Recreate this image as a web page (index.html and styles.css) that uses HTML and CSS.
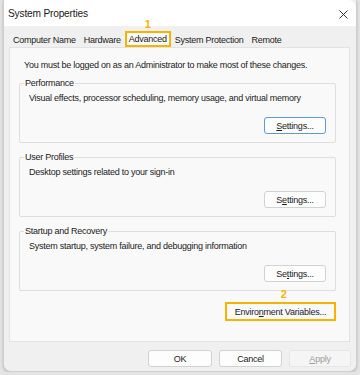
FILE: index.html
```html
<!DOCTYPE html>
<html lang="en">
<head>
    <meta charset="UTF-8">
    <meta name="viewport" content="width=device-width, initial-scale=1.0">
    <title>System Properties</title>
    <link rel="stylesheet" href="styles.css">
</head>
<body>
    <div class="window">
        <div class="titlebar">
            <span class="title">System Properties</span>
            <svg class="close" width="9" height="9" viewBox="0 0 9 9">
                <path d="M0.5 0.5 L8.5 8.5 M8.5 0.5 L0.5 8.5" stroke="#333" stroke-width="1" fill="none"/>
            </svg>
        </div>

        <!-- tabs -->
        <div class="tabs">
            <div class="tab">Computer Name</div>
            <div class="tab">Hardware</div>
            <div class="tab active">Advanced<span class="step">1</span></div>
            <div class="tab">System Protection</div>
            <div class="tab">Remote</div>
        </div>

        <div class="panel">
            <p class="note">You must be logged on as an Administrator to make most of these changes.</p>

            <fieldset class="group">
                <legend>Performance</legend>
                <p>Visual effects, processor scheduling, memory usage, and virtual memory</p>
                <div class="row"><button class="btn focus"><u>S</u>ettings...</button></div>
            </fieldset>

            <fieldset class="group">
                <legend>User Profiles</legend>
                <p>Desktop settings related to your sign-in</p>
                <div class="row"><button class="btn">S<u>e</u>ttings...</button></div>
            </fieldset>

            <fieldset class="group">
                <legend>Startup and Recovery</legend>
                <p>System startup, system failure, and debugging information</p>
                <div class="row"><button class="btn">Se<u>t</u>tings...</button></div>
            </fieldset>

            <div class="row">
                <button class="btn env">Enviro<u>n</u>ment Variables...<span class="step">2</span></button>
            </div>
        </div>

        <div class="actions">
            <button class="btn ok">OK</button>
            <button class="btn cancel">Cancel</button>
            <button class="btn disabled"><u>A</u>pply</button>
        </div>
    </div>
</body>
</html>
```

FILE: styles.css
```css
body {
    margin: 0;
    background: #e4e4e4;
    font-family: "Liberation Sans", Arial, sans-serif;
    font-size: 9px;
    letter-spacing: -0.25px;
    line-height: 12px;
    color: #1b1b1b;
}
.window {
    box-sizing: border-box;
    width: 354px;
    height: 372px;
    margin: 0 0 0 3px;
    background: #f0f0f0;
    border: 1px solid #cfcfcf;
    border-top: none;
    border-radius: 0 0 8px 8px;
    box-shadow: 0 1px 3px rgba(0, 0, 0, 0.2);
    display: flex;
    flex-direction: column;
}
.titlebar {
    height: 26px;
    background: #ffffff;
    border-radius: 0 8px 0 0;
    display: flex;
    align-items: center;
    justify-content: space-between;
    padding: 2px 8px 0 4px;
    box-sizing: border-box;
}
.title {
    font-size: 10.2px;
    letter-spacing: -0.2px;
    color: #1a1a1a;
}
.tabs {
    display: flex;
    padding: 6px 0 0 5px;
    height: 15px;
}
.tab {
    position: relative;
    padding: 2px 4px 0;
}
.tab.active {
    border: 2px solid #f5b400;
    margin-top: -1px;
    padding: 0 2px;
    height: 12px;
    background: #f9f9f9;
}
.step {
    position: absolute;
    left: 50%;
    top: -15px;
    transform: translateX(-50%);
    color: #f5b400;
    font-weight: bold;
    font-size: 11px;
    letter-spacing: 0;
}
.panel {
    flex: 1;
    margin: 0 6px 0 5px;
    background: #f9f9f9;
    border: 1px solid #e3e3e3;
    padding: 11px 13px 0 9px;
}
.note {
    margin: 0 0 6px 5px;
}
.group {
    margin: 0 0 8px 0;
    border: 1px solid #dedede;
    border-radius: 2px;
    padding: 0 9px 8px 9px;
}
.group legend {
    padding: 0 1px;
    margin-left: -5px;
}
.group p {
    margin: 3px 0 0 0;
}
.row {
    display: flex;
    justify-content: flex-end;
}
.group .row {
    margin-top: 13px;
}
.btn {
    position: relative;
    font-family: "Liberation Sans", Arial, sans-serif;
    font-size: 9px;
    letter-spacing: -0.25px;
    color: #1b1b1b;
    background: #fdfdfd;
    border: 1px solid #d2d2d2;
    border-radius: 3px;
    height: 17px;
    width: 62px;
    padding: 0;
}
.btn.focus {
    border-color: #5b9bd5;
}
.env {
    margin-top: 3px;
    width: 111px;
    height: 19px;
    border: 2px solid #f5b400;
    border-radius: 0;
    background: #f9f9f9;
}
.env .step {
    top: -16px;
    left: 53%;
}
.actions {
    display: flex;
    justify-content: flex-end;
    gap: 7px;
    padding: 8px 5px 0 0;
    height: 21px;
}
.ok {
    width: 64px;
}
.cancel {
    width: 63px;
}
.disabled {
    color: #9c9c9c;
    background: #f5f5f5;
    border-color: #e6e6e6;
}
```
